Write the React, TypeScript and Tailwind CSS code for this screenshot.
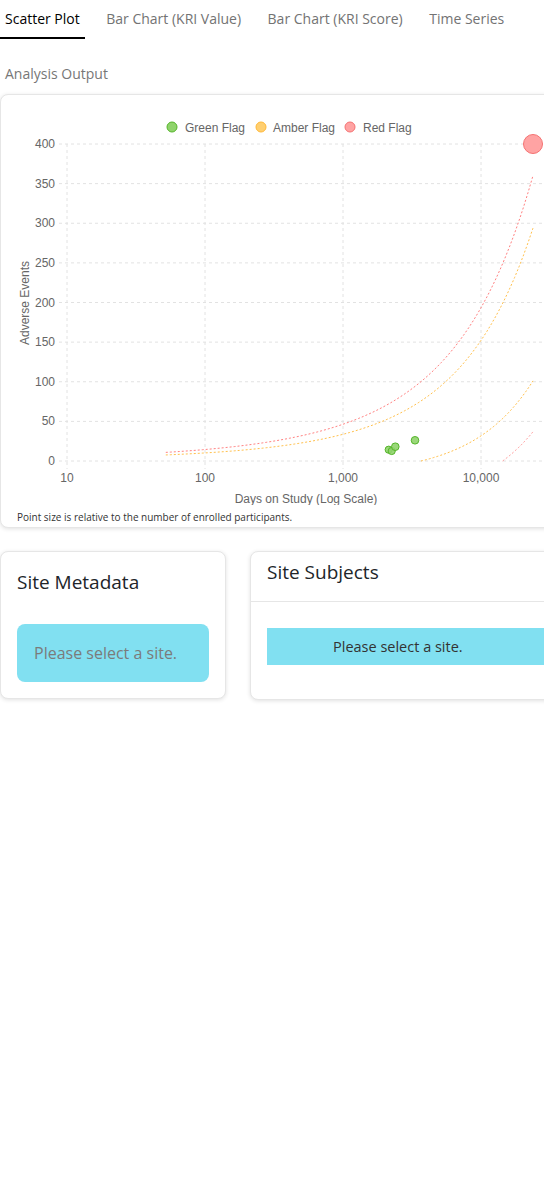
import React, { useState } from 'react';

const tabs = ['Scatter Plot', 'Bar Chart (KRI Value)', 'Bar Chart (KRI Score)', 'Time Series'];

const yTicks = [400, 350, 300, 250, 200, 150, 100, 50, 0];
const xTicks: [string, number][] = [['10', 66], ['100', 204], ['1,000', 342], ['10,000', 480]];

// chart coords: svg y = page y - 94
const xPos = (d: number) => 66 + (Math.log10(d) - 1) * 138;
const yPos = (v: number) => 460 - v * 0.7925 - 94;

const bound = (fn: (d: number) => number, from: number, to: number) => {
  const pts: string[] = [];
  const n = 80;
  for (let i = 0; i <= n; i++) {
    const d = Math.pow(10, Math.log10(from) + ((Math.log10(to) - Math.log10(from)) * i) / n);
    pts.push(`${xPos(d).toFixed(2)},${yPos(Math.max(fn(d), 0)).toFixed(2)}`);
  }
  return pts.join(' ');
};

const redUpper = bound(d => 0.0075 * d + 1.163 * Math.sqrt(d) + 2.1, 52, 23800);
const amberUpper = bound(d => 0.00716 * d + 0.79 * Math.sqrt(d) + 1.56, 52, 23800);
const amberLower = bound(d => 0.00502 * (d - 3673) + 0.0000000001 * (d - 3673) * (d - 3673), 3673, 23800);
const redLower = bound(d => 0.0039 * (d - 14350), 14350, 23800);

const green = { fill: '#8fd36b', stroke: '#55b52a' };
const amber = { fill: '#ffcf70', stroke: '#ffb938' };
const red = { fill: '#ffa3a3', stroke: '#f57272' };

const greenDots: [number, number, number][] = [
  [387.7, 448.7, 3.6], [390.7, 450, 3.6], [394.3, 445.7, 3.8], [414, 439.3, 3.8],
];

const ScatterChart = () => (
  <svg width={576} height={410} className="block" style={{ fontFamily: '"Liberation Sans", Arial, sans-serif' }}>
    {/* legend */}
    {[
      { label: 'Green Flag', cx: 171, tx: 184, c: green },
      { label: 'Amber Flag', cx: 260, tx: 272, c: amber },
      { label: 'Red Flag', cx: 349, tx: 362, c: red },
    ].map(l => (
      <g key={l.label}>
        <circle cx={l.cx} cy={32} r={5} fill={l.c.fill} stroke={l.c.stroke} strokeWidth={1} />
        <text x={l.tx} y={36.5} fontSize={12} fill="#666">{l.label}</text>
      </g>
    ))}

    {/* horizontal grid */}
    {yTicks.map(v => (
      <g key={v}>
        <line x1={58} x2={576} y1={yPos(v)} y2={yPos(v)} stroke="#e2e2e2" strokeDasharray="3 3" />
        <text x={54} y={yPos(v) + 4} fontSize={12} fill="#666" textAnchor="end">{v}</text>
      </g>
    ))}

    {/* vertical grid */}
    {xTicks.map(([label, x]) => (
      <g key={label}>
        <line x1={x} x2={x} y1={49} y2={374} stroke="#e2e2e2" strokeDasharray="3 3" />
        <text x={x} y={387} fontSize={12} fill="#666" textAnchor="middle">{label}</text>
      </g>
    ))}

    <text x={305} y={408} fontSize={12} fill="#666" textAnchor="middle">Days on Study (Log Scale)</text>
    <text x={0} y={0} fontSize={12} fill="#666" textAnchor="middle" transform="translate(28 208) rotate(-90)">Adverse Events</text>

    {/* funnel bounds */}
    <polyline points={redUpper} fill="none" stroke="#ff6b6b" strokeWidth={1} strokeDasharray="2 2" opacity={0.85} />
    <polyline points={amberUpper} fill="none" stroke="#ffb52e" strokeWidth={1} strokeDasharray="2 2" opacity={0.85} />
    <polyline points={amberLower} fill="none" stroke="#ffb52e" strokeWidth={1} strokeDasharray="2 2" opacity={0.85} />
    <polyline points={redLower} fill="none" stroke="#ff6b6b" strokeWidth={1} strokeDasharray="2 2" opacity={0.7} />

    {greenDots.map(([x, y, r], i) => (
      <circle key={i} cx={x} cy={y - 94} r={r} fill={green.fill} stroke={green.stroke} strokeWidth={1} fillOpacity={0.9} />
    ))}
    <circle cx={532} cy={143 - 94} r={9.5} fill={red.fill} stroke={red.stroke} strokeWidth={1} />
  </svg>
);

const App = () => {
  const [active, setActive] = useState(0);

  return (
    <div className="w-[544px] overflow-hidden bg-white" style={{ fontFamily: '"Open Sans", "Noto Sans", sans-serif' }}>
      <div className="w-[576px]">
        <div className="flex gap-[16.5px]">
          {tabs.map((t, i) => (
            <button
              key={t}
              onClick={() => setActive(i)}
              className={
                i === active
                  ? 'border-b-2 border-black px-[5px] pb-[8px] pt-[9px] text-[14px] leading-5 text-black'
                  : 'border-b-2 border-transparent px-[5px] pb-[8px] pt-[9px] text-[14px] leading-5 text-[#737373]'
              }
            >
              {t}
            </button>
          ))}
        </div>

        <div className="mt-[25px] px-[5px] text-[14px] leading-5 text-[#777]">Analysis Output</div>

        <div className="mt-[10px] h-[434px] rounded-lg border border-[#e6e6e6] bg-white shadow-[0_1px_4px_rgba(0,0,0,0.12)]">
          <ScatterChart />
          <div className="pl-[16px] pt-[6px] text-[10px] leading-3 text-[#333]">
            Point size is relative to the number of enrolled participants.
          </div>
        </div>

        <div className="mt-[23px] flex items-start gap-6">
          <div className="w-[226px] rounded-lg border border-[#e6e6e6] bg-white p-[16px] pt-[14px] shadow-[0_1px_4px_rgba(0,0,0,0.12)]">
            <div className="text-[19px] leading-8 text-[#212529]">Site Metadata</div>
            <div className="mt-[26px] flex h-[58px] items-center rounded-lg bg-[#81e0f1] px-[17px] text-[16px] text-[#7b7b7b]">
              Please select a site.
            </div>
          </div>

          <div className="w-[326px] rounded-lg border border-[#e6e6e6] bg-white shadow-[0_1px_4px_rgba(0,0,0,0.12)]">
            <div className="h-[50px] border-b border-[#e6e6e6] px-[16px] pt-[4px] text-[19px] leading-8 text-[#212529]">
              Site Subjects
            </div>
            <div className="px-[16px] pb-[34px] pt-[26px]">
              <div className="flex h-[37px] items-center bg-[#81e0f1] pl-[66px] text-[14.5px] text-[#333]">
                Please select a site.
              </div>
            </div>
          </div>
        </div>
        <div className="h-[500px]" />
      </div>
    </div>
  );
};

export default App;
